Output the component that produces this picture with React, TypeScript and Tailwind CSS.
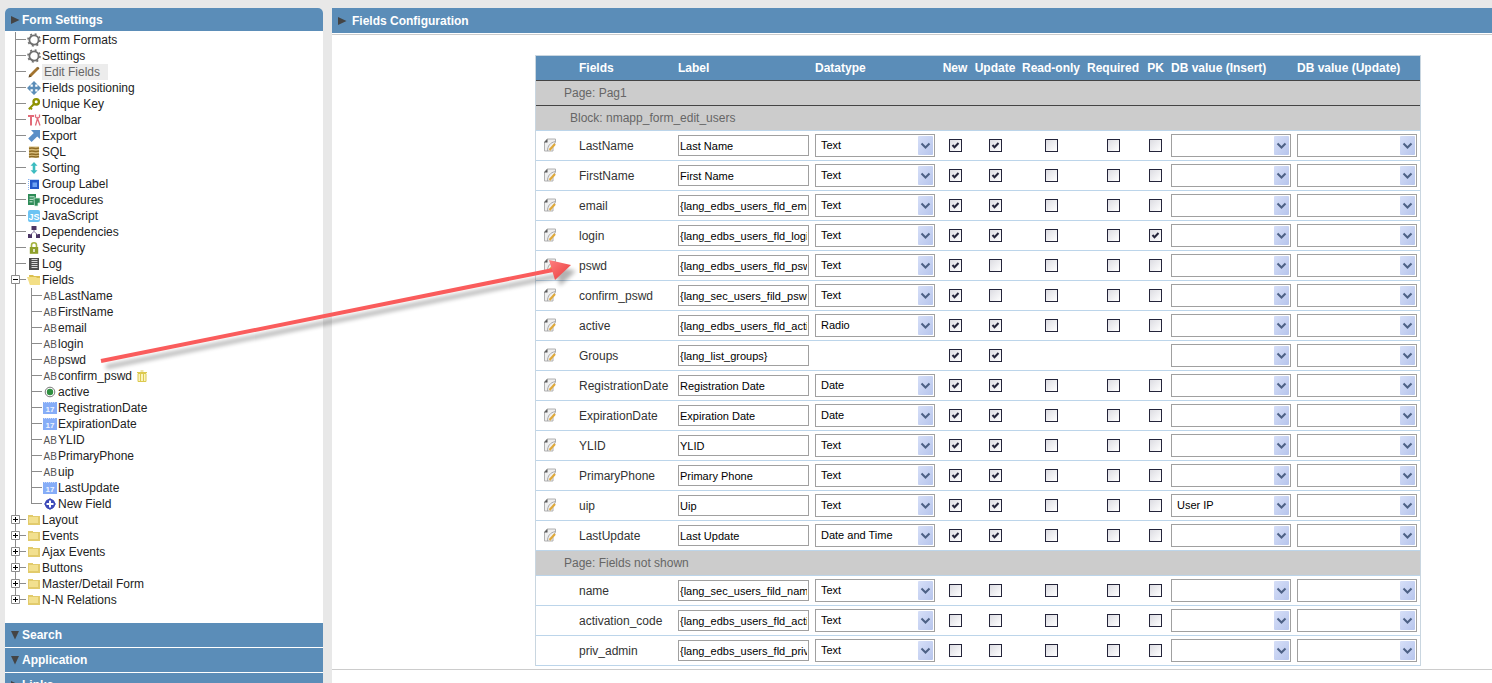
import { useState } from "react";
import type { ReactNode } from "react";

type IconName =
  | "gear"
  | "pencil"
  | "move"
  | "key"
  | "tools"
  | "export"
  | "sql"
  | "sort"
  | "group"
  | "proc"
  | "js"
  | "deps"
  | "lock"
  | "log"
  | "folderOpen"
  | "folder"
  | "ab"
  | "radio"
  | "date"
  | "plus";

const ICONS: Record<IconName, ReactNode> = {
  gear: (
    <g fill="none" stroke="#707070">
      <circle cx="7" cy="7" r="4.6" strokeWidth="1.8" />
      <circle cx="7" cy="7" r="6" strokeWidth="1.6" strokeDasharray="2 2.71" />
    </g>
  ),
  pencil: (
    <>
      <path d="M3 11 11 3" stroke="#a3742f" strokeWidth="2.8" />
      <path d="M1.5 12.5 2.3 9.6 4.4 11.7Z" fill="#5e4522" />
      <path d="M10.4 2.2 12 3.8" stroke="#7a5a2a" strokeWidth="1.4" />
    </>
  ),
  move: (
    <g fill="#5b8db8">
      <path d="M5.8 2h2.4v10H5.800zM2 5.800h10v2.400H2z" />
      <path d="M7 0l3.500 3.500h-7zM7 14l3.500-3.500h-7zM0 7l3.500-3.500v7zM14 7l-3.500-3.500v7z" />
    </g>
  ),
  key: (
    <g fill="none" stroke="#8f9200">
      <circle cx="9.2" cy="4.8" r="2.7" strokeWidth="2.4" />
      <path d="M7 7 1.8 12.2M3.2 10.6 5 12.4" strokeWidth="2" />
    </g>
  ),
  tools: (
    <g fill="none" stroke="#e26a78">
      <path d="M1 3h6M4 3v9.5" strokeWidth="2" />
      <path
        d="M8.500 12.500 10.500 5.500 13 12.500M8.500 1.500v2.500l2 1.500 2-1.500V1.500"
        strokeWidth="1.300"
      />
    </g>
  ),
  export: (
    <path d="M4 1h9v9L10.2 7.4 4.6 13 1.2 9.6 6.8 3.9Z" fill="#5b8fc7" />
  ),
  sql: (
    <>
      <path d="M2 1.5h10v11H2z" fill="#d9bd7c" />
      <path
        d="M2 3.5c4-1.5 6 1 10-.5M2 6.5c4-1.5 6 1 10-.5M2 9.5c4-1.5 6 1 10-.5M2 12c4-1.5 6 1 10-.5"
        fill="none"
        stroke="#8c6a25"
        strokeWidth="1.4"
      />
    </>
  ),
  sort: (
    <path
      d="M7 1l3.5 3.8H8.3v4.4h2.2L7 13 3.5 9.2h2.2V4.8H3.5Z"
      fill="#3cbcc0"
    />
  ),
  group: (
    <>
      <path
        d="M1.5 2v11M1.5 2.5H12"
        stroke="#8ab4ee"
        strokeDasharray="1 1"
        fill="none"
      />
      <path d="M3 3h9v9H3z" fill="#2457c9" />
      <path d="M5.5 5.5h4.5v4.5H5.5z" fill="#6fa2f3" />
    </>
  ),
  proc: (
    <>
      <path d="M1 1h8v11H1z" fill="#2e8b57" />
      <path d="M2.5 3.8h5M2.5 6.3h4M2.5 8.8h3" stroke="#d5f0df" />
      <path
        d="M7 5h6v5h-2v3H7.5z"
        fill="#2e8b57"
        stroke="#d5f0df"
        strokeWidth="0.7"
      />
    </>
  ),
  js: (
    <>
      <rect x="1" y="1" width="12" height="12" rx="2" fill="#6cc3f3" />
      <text
        x="7"
        y="10.5"
        textAnchor="middle"
        fontSize="9"
        fontWeight="bold"
        fill="#fff"
      >
        JS
      </text>
    </>
  ),
  deps: (
    <g fill="#4b3565">
      <path d="M4.5 1h5v4h-5zM1 9h4v4H1zM9 9h4v4H9z" />
      <path d="M7 5v1.5L3 10M7 6.5 11 10" fill="none" stroke="#8f7fa3" />
    </g>
  ),
  lock: (
    <>
      <path
        d="M4.5 7V4.2a2.5 2.5 0 0 1 5 0V7"
        fill="none"
        stroke="#a5b340"
        strokeWidth="1.6"
      />
      <path d="M2.8 6h8.4v6.8H2.8z" fill="#8fa02a" />
      <path d="M7 8v3" stroke="#fff" strokeWidth="1.4" />
    </>
  ),
  log: (
    <>
      <path d="M2 1h10v12H2z" fill="#4d4d4d" />
      <path
        d="M4.5 2.5h6M4.5 4.5h6M4.5 6.5h6M4.5 8.5h6M4.5 10.5h6"
        stroke="#d8d8d8"
      />
    </>
  ),
  folderOpen: (
    <>
      <path d="M2 2h4l1 1h6v9H3z" fill="#dcc04f" />
      <path d="M0 4h9l1 1h3v7H3z" fill="#f3df86" />
    </>
  ),
  folder: (
    <>
      <path d="M1 2h5v1h7v9H1z" fill="#e2cb6c" />
      <path d="M2 4h9v6H2z" fill="#f2e08f" />
    </>
  ),
  ab: (
    <text x="0.5" y="11" fontSize="10" fill="#555">
      AB
    </text>
  ),
  radio: (
    <>
      <circle cx="7" cy="7" r="4.8" fill="#fff" stroke="#777" />
      <circle cx="7" cy="7" r="3.2" fill="#2f8f3f" />
    </>
  ),
  date: (
    <>
      <path d="M0 1h14v12H0z" fill="#86adf7" />
      <path d="M1 1.5h12" stroke="#c9dafb" strokeDasharray="1 1" />
      <text
        x="7"
        y="11"
        textAnchor="middle"
        fontSize="8"
        fontWeight="bold"
        fill="#eef4ff"
      >
        17
      </text>
    </>
  ),
  plus: (
    <>
      <path d="M7 1 13 7 7 13 1 7z" fill="#3c49b8" />
      <circle cx="7" cy="7" r="5.2" fill="#3c49b8" />
      <path d="M7 3.500v7M3.500 7h7" stroke="#fff" strokeWidth="2" />
    </>
  ),
};

function TreeIcon({ name }: { name: IconName }) {
  return (
    <svg width="14" height="14" viewBox="0 0 14 14" className="shrink-0">
      {ICONS[name]}
    </svg>
  );
}

interface TreeNode {
  label: string;
  icon: IconName;
  active?: boolean;
  trash?: boolean;
  children?: TreeNode[];
}

const TREE: TreeNode[] = [
  { label: "Form Formats", icon: "gear" },
  { label: "Settings", icon: "gear" },
  { label: "Edit Fields", icon: "pencil", active: true },
  { label: "Fields positioning", icon: "move" },
  { label: "Unique Key", icon: "key" },
  { label: "Toolbar", icon: "tools" },
  { label: "Export", icon: "export" },
  { label: "SQL", icon: "sql" },
  { label: "Sorting", icon: "sort" },
  { label: "Group Label", icon: "group" },
  { label: "Procedures", icon: "proc" },
  { label: "JavaScript", icon: "js" },
  { label: "Dependencies", icon: "deps" },
  { label: "Security", icon: "lock" },
  { label: "Log", icon: "log" },
  {
    label: "Fields",
    icon: "folderOpen",
    children: [
      { label: "LastName", icon: "ab" },
      { label: "FirstName", icon: "ab" },
      { label: "email", icon: "ab" },
      { label: "login", icon: "ab" },
      { label: "pswd", icon: "ab" },
      { label: "confirm_pswd", icon: "ab", trash: true },
      { label: "active", icon: "radio" },
      { label: "RegistrationDate", icon: "date" },
      { label: "ExpirationDate", icon: "date" },
      { label: "YLID", icon: "ab" },
      { label: "PrimaryPhone", icon: "ab" },
      { label: "uip", icon: "ab" },
      { label: "LastUpdate", icon: "date" },
      { label: "New Field", icon: "plus" },
    ],
  },
  { label: "Layout", icon: "folder", children: [] },
  { label: "Events", icon: "folder", children: [] },
  { label: "Ajax Events", icon: "folder", children: [] },
  { label: "Buttons", icon: "folder", children: [] },
  { label: "Master/Detail Form", icon: "folder", children: [] },
  { label: "N-N Relations", icon: "folder", children: [] },
];

interface FieldRow {
  name: string;
  label: string;
  type?: string;
  isNew?: boolean;
  update?: boolean;
  pk?: boolean;
  insert?: string;
  // Relation fields have no datatype, read-only, required or PK settings
  relation?: boolean;
}

const SHOWN: FieldRow[] = [
  { name: "LastName", label: "Last Name", type: "Text", isNew: true, update: true },
  { name: "FirstName", label: "First Name", type: "Text", isNew: true, update: true },
  { name: "email", label: "{lang_edbs_users_fld_email}", type: "Text", isNew: true, update: true },
  { name: "login", label: "{lang_edbs_users_fld_login}", type: "Text", isNew: true, update: true, pk: true },
  { name: "pswd", label: "{lang_edbs_users_fld_pswd}", type: "Text", isNew: true },
  { name: "confirm_pswd", label: "{lang_sec_users_fild_pswd_confirm}", type: "Text", isNew: true },
  { name: "active", label: "{lang_edbs_users_fld_active}", type: "Radio", isNew: true, update: true },
  { name: "Groups", label: "{lang_list_groups}", isNew: true, update: true, relation: true },
  { name: "RegistrationDate", label: "Registration Date", type: "Date", isNew: true, update: true },
  { name: "ExpirationDate", label: "Expiration Date", type: "Date", isNew: true, update: true },
  { name: "YLID", label: "YLID", type: "Text", isNew: true, update: true },
  { name: "PrimaryPhone", label: "Primary Phone", type: "Text", isNew: true, update: true },
  { name: "uip", label: "Uip", type: "Text", isNew: true, update: true, insert: "User IP" },
  { name: "LastUpdate", label: "Last Update", type: "Date and Time", isNew: true, update: true },
];

const NOT_SHOWN: FieldRow[] = [
  { name: "name", label: "{lang_sec_users_fild_name}", type: "Text" },
  { name: "activation_code", label: "{lang_edbs_users_fld_activation_code}", type: "Text" },
  { name: "priv_admin", label: "{lang_edbs_users_fld_priv_admin}", type: "Text" },
];

const DATATYPES = ["Text", "Radio", "Date", "Date and Time"];
const DB_VALUES = ["", "User IP"];

function Connector({
  line = "branch",
  box,
}: {
  line?: "branch" | "last" | "through";
  box?: "open" | "closed";
}) {
  return (
    <svg
      width="16"
      height="16"
      viewBox="0 0 16 16"
      fill="none"
      stroke="#8c8c8c"
      className="shrink-0"
    >
      <path d={line === "last" ? "M4.5 0v8" : "M4.5 0v16"} />
      {line !== "through" && <path d="M4 7.5h11" />}
      {box && (
        <>
          <path d="M.5 3.5h8v8h-8z" fill="#fff" />
          <path d="M2 7.5h5" stroke="#000" />
          {box === "closed" && <path d="M4.5 5v5" stroke="#000" />}
        </>
      )}
    </svg>
  );
}

function TreeItem({
  node,
  last,
  nested,
}: {
  node: TreeNode;
  last: boolean;
  nested?: boolean;
}) {
  const [open, setOpen] = useState(!!node.children?.length);

  return (
    <li>
      <div className="flex h-4 items-center">
        {nested && <Connector line="through" />}
        {node.children ? (
          <button
            type="button"
            aria-label={`Toggle ${node.label}`}
            onClick={() => setOpen(!open)}
          >
            <Connector
              line={last ? "last" : "branch"}
              box={open ? "open" : "closed"}
            />
          </button>
        ) : (
          <Connector line={last ? "last" : "branch"} />
        )}
        <TreeIcon name={node.icon} />
        <a
          href="#"
          className={
            node.active
              ? "ml-px bg-[#ececec] pr-2 pl-0.5 text-[#666]"
              : "pl-px text-[#222]"
          }
        >
          {node.label}
        </a>
        {node.trash && (
          <button type="button" aria-label={`Delete ${node.label}`}>
            <svg
              width="12"
              height="12"
              viewBox="0 0 12 12"
              className="ml-1"
              fill="none"
              stroke="#dcc94e"
            >
              <path d="M2 3.5h8v8H2z" fill="#faf3bd" />
              <path d="M1 2.5h10M4.5 1h3M4.5 4v7M7.5 4v7" />
            </svg>
          </button>
        )}
      </div>
      {open && !!node.children?.length && (
        <ul>
          {node.children.map((child, i) => (
            <TreeItem
              key={child.label}
              node={child}
              last={i === node.children!.length - 1}
              nested
            />
          ))}
        </ul>
      )}
    </li>
  );
}

function Triangle({ down }: { down?: boolean }) {
  return (
    <svg width="10" height="10" viewBox="0 0 10 10" fill="#444">
      <path d={down ? "M1 1h8L5 9.5z" : "M1 1l8.5 4L1 9z"} />
    </svg>
  );
}

function Dropdown({
  label,
  value,
  options,
}: {
  label: string;
  value: string;
  options: string[];
}) {
  return (
    <div className="relative h-[23px] w-[120px]">
      <select
        aria-label={label}
        defaultValue={value}
        className="block h-full w-full appearance-none border border-[#a0a0a0] bg-white pl-[5px] text-[11px] text-black"
      >
        {options.map((o) => (
          <option key={o} value={o}>
            {o}
          </option>
        ))}
      </select>
      <svg
        width="15"
        height="19"
        viewBox="0 0 15 19"
        className="pointer-events-none absolute top-0.5 right-0.5"
      >
        <defs>
          <linearGradient id="dd" x1="0" y1="0" x2="1" y2="1">
            <stop offset="0" stopColor="#d6dff8" />
            <stop offset="1" stopColor="#b7c5ec" />
          </linearGradient>
        </defs>
        <rect width="15" height="19" rx="1" fill="url(#dd)" />
        <path
          d="M3.5 7.5l4 4 4-4"
          fill="none"
          stroke="#4d6185"
          strokeWidth="2"
        />
      </svg>
    </div>
  );
}

function Check({ label, checked }: { label: string; checked?: boolean }) {
  return (
    <span className="relative mx-auto block size-[13px]">
      <input
        type="checkbox"
        aria-label={label}
        defaultChecked={checked}
        className="peer block size-[13px] appearance-none border border-[#24243a] bg-linear-to-br from-[#dcdce2] to-white"
      />
      <svg
        viewBox="0 0 13 13"
        className="pointer-events-none absolute inset-0 hidden peer-checked:block"
      >
        <path
          d="M3.5 6l2 2.3 4-4.3"
          fill="none"
          stroke="#24243a"
          strokeWidth="2"
        />
      </svg>
    </span>
  );
}

function EditIcon() {
  return (
    <svg width="14" height="14" viewBox="0 0 14 14" className="block">
      <path d="M4 1h8.5v3L10 8.5V13H1.5V4z" fill="#efefef" stroke="#b0b0b0" />
      <path d="M1 4.5 4.5 1v3.5z" fill="#555" />
      <path d="M4.5 13C4.5 8 7 4.5 12.5 3.5" fill="none" stroke="#a8a8a8" />
      <path d="M6.5 12 12 6" stroke="#dfa93a" strokeWidth="2.2" />
    </svg>
  );
}

function GroupRow({
  children,
  block,
  dark,
}: {
  children: ReactNode;
  block?: boolean;
  dark?: boolean;
}) {
  return (
    <tr className="h-[25px] bg-[#ccc] text-[#666]">
      <td
        colSpan={11}
        className={`border-b ${dark ? "border-[#444]" : "border-[#bcd5ea]"} ${block ? "pl-[34px]" : "pl-7"}`}
      >
        {children}
      </td>
    </tr>
  );
}

function Row({ field, editable }: { field: FieldRow; editable?: boolean }) {
  const cell = "border-b border-[#bcd5ea]";
  return (
    <tr className="h-[30px] bg-white">
      <td className={cell}>
        {editable && (
          <button
            type="button"
            aria-label={`Edit ${field.name}`}
            className="ml-[7px] block pb-0.5"
          >
            <EditIcon />
          </button>
        )}
      </td>
      <td className={`${cell} pl-[3px] text-[#333]`}>{field.name}</td>
      <td className={`${cell} px-[3px]`}>
        <input
          type="text"
          aria-label={`${field.name} label`}
          defaultValue={field.label}
          className="block h-[21px] w-full border border-[#a0a0a0] bg-white px-px text-[11px] text-black"
        />
      </td>
      <td className={`${cell} px-[3px]`}>
        {!field.relation && (
          <Dropdown
            label={`${field.name} datatype`}
            value={field.type ?? "Text"}
            options={DATATYPES}
          />
        )}
      </td>
      <td className={cell}>
        <Check label={`${field.name} new`} checked={field.isNew} />
      </td>
      <td className={cell}>
        <Check label={`${field.name} update`} checked={field.update} />
      </td>
      <td className={cell}>
        {!field.relation && <Check label={`${field.name} read-only`} />}
      </td>
      <td className={cell}>
        {!field.relation && <Check label={`${field.name} required`} />}
      </td>
      <td className={cell}>
        {!field.relation && (
          <Check label={`${field.name} primary key`} checked={field.pk} />
        )}
      </td>
      <td className={`${cell} px-[3px]`}>
        <Dropdown
          label={`${field.name} insert value`}
          value={field.insert ?? ""}
          options={DB_VALUES}
        />
      </td>
      <td className={`${cell} px-[3px]`}>
        <Dropdown
          label={`${field.name} update value`}
          value=""
          options={DB_VALUES}
        />
      </td>
    </tr>
  );
}

function FieldsTable() {
  return (
    <table className="w-[886px] table-fixed border-separate border-spacing-0 border-x border-t border-[#c9d6e0]">
      <colgroup>
        <col className="w-10" />
        <col className="w-[99px]" />
        <col className="w-[137px]" />
        <col className="w-[127px]" />
        <col className="w-8" />
        <col className="w-12" />
        <col className="w-16" />
        <col className="w-[60px]" />
        <col className="w-[25px]" />
        <col className="w-[126px]" />
        <col className="w-[126px]" />
      </colgroup>
      <thead>
        <tr className="h-[25px] bg-[#5b8db8] text-left whitespace-nowrap text-white *:border-b *:border-[#444]">
          <td />
          <th className="pl-[3px]">Fields</th>
          <th className="pl-[3px]">Label</th>
          <th className="pl-[3px]">Datatype</th>
          <th className="text-center">New</th>
          <th className="text-center">Update</th>
          <th className="text-center">Read-only</th>
          <th className="text-center">Required</th>
          <th className="text-center">PK</th>
          <th className="pl-[3px]">DB value (Insert)</th>
          <th className="pl-[3px]">DB value (Update)</th>
        </tr>
      </thead>
      <tbody>
        <GroupRow dark>Page: Pag1</GroupRow>
        <GroupRow block>Block: nmapp_form_edit_users</GroupRow>
        {SHOWN.map((f) => (
          <Row key={f.name} field={f} editable />
        ))}
        <GroupRow>Page: Fields not shown</GroupRow>
        {NOT_SHOWN.map((f) => (
          <Row key={f.name} field={f} />
        ))}
      </tbody>
    </table>
  );
}

function PointerArrow() {
  return (
    <svg
      width="490"
      height="130"
      viewBox="96 250 490 130"
      className="pointer-events-none absolute top-[250px] left-24"
    >
      <defs>
        <filter id="soft" x="-5%" y="-20%" width="110%" height="140%">
          <feGaussianBlur stdDeviation="2" />
        </filter>
        <linearGradient id="head" x1="0" y1="0" x2="1" y2="1">
          <stop offset="0" stopColor="#ff8080" />
          <stop offset="1" stopColor="#e83a3a" />
        </linearGradient>
      </defs>
      <g
        filter="url(#soft)"
        transform="translate(5 6)"
        stroke="#000"
        opacity="0.3"
      >
        <path d="M101 361 552 270" strokeWidth="4" />
        <path d="M571 265 550 260 555 280z" stroke="none" />
      </g>
      <path d="M101 361 553 270" stroke="#fa5c5c" strokeWidth="4" />
      <path d="M571 265 549 260 555 280z" fill="url(#head)" />
    </svg>
  );
}

const SECTIONS = [
  { title: "Search", down: true },
  { title: "Application", down: true },
  { title: "Links", down: false },
];

export default function App() {
  return (
    <div className="relative flex h-screen items-stretch gap-[9px] overflow-hidden bg-[#e8e8e8] pt-2 pl-[5px] font-['Liberation_Sans',Arial,sans-serif] text-xs">
      <aside className="w-[318px] shrink-0 rounded-t-[5px] bg-white">
        <button
          type="button"
          className="flex h-[23px] w-full items-center gap-0.5 rounded-t-[5px] bg-[#5b8db8] pl-[5px] font-bold text-white"
        >
          <Triangle />
          Form Settings
        </button>
        <ul className="pt-px pb-[15px] pl-1.5">
          {TREE.map((node, i) => (
            <TreeItem
              key={node.label}
              node={node}
              last={i === TREE.length - 1}
            />
          ))}
        </ul>
        <div className="flex flex-col gap-px">
          {SECTIONS.map((section) => (
            <button
              key={section.title}
              type="button"
              className="flex h-6 items-center gap-0.5 bg-[#5b8db8] pl-[5px] font-bold text-white"
            >
              <Triangle down={section.down} />
              {section.title}
            </button>
          ))}
        </div>
      </aside>

      <main className="min-w-0 flex-1 bg-white">
        <div className="flex h-[25px] items-center gap-[5px] bg-[#5b8db8] pl-[5px] font-bold text-white">
          <Triangle />
          <h1>Fields Configuration</h1>
        </div>
        <div className="mt-px border-y border-[#ccc] pt-5 pb-[3px] pl-[203px]">
          <FieldsTable />
        </div>
      </main>

      <PointerArrow />
    </div>
  );
}
